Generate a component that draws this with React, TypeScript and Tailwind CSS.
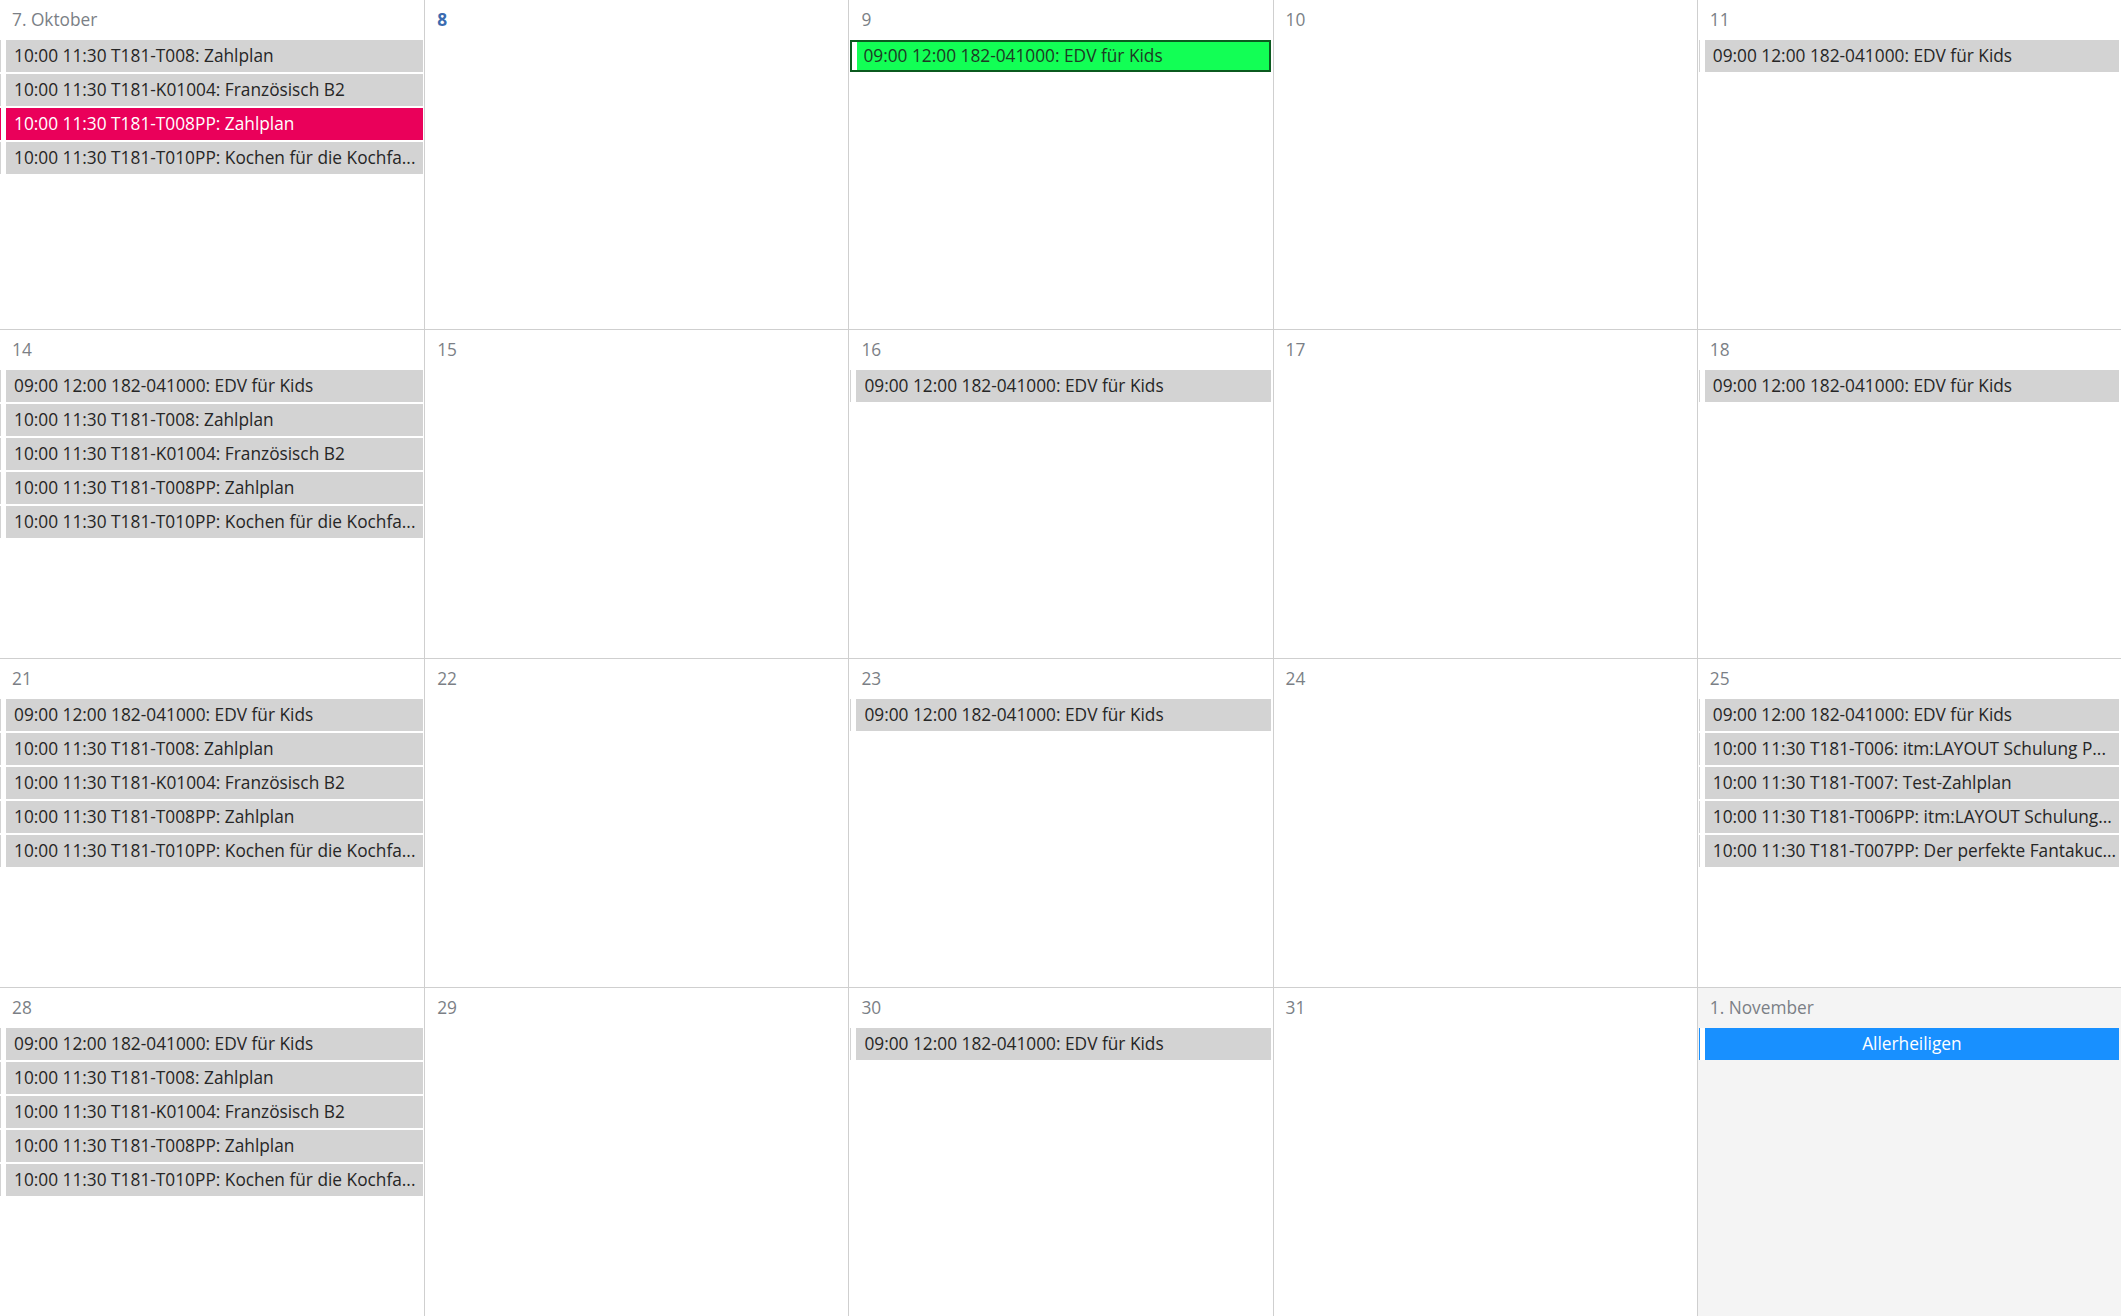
import React from 'react';

type Kind = 'gray' | 'pink' | 'green' | 'holiday';

interface CalEvent {
  text: string;
  kind?: Kind;
}

interface Day {
  label: string;
  today?: boolean;
  otherMonth?: boolean;
  events: CalEvent[];
}

const EDV = '09:00 12:00 182-041000: EDV für Kids';
const T008 = '10:00 11:30 T181-T008: Zahlplan';
const K01004 = '10:00 11:30 T181-K01004: Französisch B2';
const T008PP = '10:00 11:30 T181-T008PP: Zahlplan';
const T010PP = '10:00 11:30 T181-T010PP: Kochen für die Kochfa...';

const fullWeek: CalEvent[] = [
  { text: EDV },
  { text: T008 },
  { text: K01004 },
  { text: T008PP },
  { text: T010PP },
];

const days: Day[] = [
  {
    label: '7. Oktober',
    events: [{ text: T008 }, { text: K01004 }, { text: T008PP, kind: 'pink' }, { text: T010PP }],
  },
  { label: '8', today: true, events: [] },
  { label: '9', events: [{ text: EDV, kind: 'green' }] },
  { label: '10', events: [] },
  { label: '11', events: [{ text: EDV }] },

  { label: '14', events: fullWeek },
  { label: '15', events: [] },
  { label: '16', events: [{ text: EDV }] },
  { label: '17', events: [] },
  { label: '18', events: [{ text: EDV }] },

  { label: '21', events: fullWeek },
  { label: '22', events: [] },
  { label: '23', events: [{ text: EDV }] },
  { label: '24', events: [] },
  {
    label: '25',
    events: [
      { text: EDV },
      { text: '10:00 11:30 T181-T006: itm:LAYOUT Schulung P...' },
      { text: '10:00 11:30 T181-T007: Test-Zahlplan' },
      { text: '10:00 11:30 T181-T006PP: itm:LAYOUT Schulung...' },
      { text: '10:00 11:30 T181-T007PP: Der perfekte Fantakuc...' },
    ],
  },

  { label: '28', events: fullWeek },
  { label: '29', events: [] },
  { label: '30', events: [{ text: EDV }] },
  { label: '31', events: [] },
  { label: '1. November', otherMonth: true, events: [{ text: 'Allerheiligen', kind: 'holiday' }] },
];

function EventBar({ ev }: { ev: CalEvent }) {
  const kind = ev.kind ?? 'gray';

  if (kind === 'green') {
    return (
      <div className="flex h-8 mb-0.5 border-2 border-[#0b5a1f] bg-[#12ff55]">
        <span className="w-[5px] shrink-0 bg-white" />
        <span className="flex items-center pl-[6px] text-[#1d3b24] truncate">{ev.text}</span>
      </div>
    );
  }

  if (kind === 'holiday') {
    return (
      <div className="flex h-8 mb-0.5 pl-px bg-[#1890ff]">
        <span className="w-[5px] shrink-0 bg-white" />
        <span className="flex flex-1 items-center justify-center text-white truncate">{ev.text}</span>
      </div>
    );
  }

  const bg = kind === 'pink' ? 'bg-[#ea005a] text-white' : 'bg-[#d3d3d3] text-[#262626]';

  return (
    <div className={`flex h-8 mb-0.5 pl-px ${bg}`}>
      <span className="w-[5px] shrink-0 bg-white" />
      <span className="flex items-center pl-2 truncate">{ev.text}</span>
    </div>
  );
}

function DayCell({ day, index }: { day: Day; index: number }) {
  const col = index % 5;
  const row = Math.floor(index / 5);

  return (
    <div
      className={`flex flex-col min-w-0 overflow-hidden ${col > 0 ? 'border-l border-[#cfcfcf]' : ''} ${
        row > 0 ? 'border-t border-[#cfcfcf]' : ''
      } ${day.otherMonth ? 'bg-[#f4f4f4]' : 'bg-white'}`}
    >
      <div
        className={`h-10 shrink-0 flex items-center pl-3 pb-px ${
          day.today ? 'font-bold text-[#3b6bb0]' : 'text-[#7b7f86]'
        }`}
      >
        {day.label}
      </div>
      <div className={`flex flex-col ${col > 0 ? 'pl-px pr-[2px]' : 'pr-px'}`}>
        {day.events.map((ev, i) => (
          <EventBar key={i} ev={ev} />
        ))}
      </div>
    </div>
  );
}

export default function App() {
  return (
    <div
      className="w-[2121px] h-[1316px] overflow-hidden bg-white text-[17.3px] leading-none"
      style={{ fontFamily: '"Open Sans", "Noto Sans", sans-serif' }}
    >
      <div className="grid grid-cols-5 grid-rows-4 h-full">
        {days.map((day, i) => (
          <DayCell key={i} day={day} index={i} />
        ))}
      </div>
    </div>
  );
}
